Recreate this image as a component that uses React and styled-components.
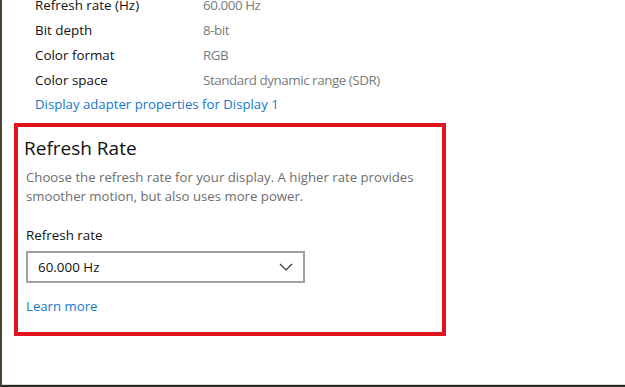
import React from "react";
import styled, { createGlobalStyle } from "styled-components";

const Global = createGlobalStyle`
  html, body { margin: 0; padding: 0; background: #fff; }
  body { font-family: "Open Sans", "Noto Sans", sans-serif; overflow: hidden; }
`;

const Frame = styled.div`
  width: 625px;
  height: 387px;
  box-sizing: border-box;
  border-left: 2px solid #4a4436;
  border-bottom: 2px solid #2c2a26;
  background: #fff;
  overflow: hidden;
  display: flex;
  flex-direction: column;
`;

const Panel = styled.div`
  flex: 1;
  border-bottom: 1px solid #d8d8d8;
  display: flex;
  flex-direction: column;
  margin-top: -8px;
`;

const InfoList = styled.div`
  padding-left: 33px;
  display: flex;
  flex-direction: column;
`;

const InfoRow = styled.div`
  display: grid;
  grid-template-columns: 168px 1fr;
  height: 25px;
  align-items: center;
  font-size: 13.4px;
`;

const Key = styled.span`
  color: #111;
`;

const Value = styled.span`
  color: #7a7a7a;
  letter-spacing: -0.45px;
`;

const Link = styled.a`
  color: #1677c9;
  font-size: 13.2px;
  text-decoration: none;
  line-height: 25px;
  display: block;
`;

const Highlight = styled.section`
  margin: 6px 0 0 12px;
  width: 432px;
  height: 213px;
  box-sizing: border-box;
  border: 4px solid #e0141c;
  padding: 6px 0 0 6px;
  display: flex;
  flex-direction: column;
`;

const Heading = styled.h2`
  margin: 0;
  font-size: 19px;
  font-weight: 400;
  color: #111;
  line-height: 30px;
`;

const Description = styled.p`
  margin: 5px 0 0 2px;
  font-size: 13.2px;
  line-height: 19px;
  color: #6e6e6e;
  width: 410px;
`;

const Label = styled.div`
  margin: 19px 0 0 2px;
  font-size: 13.4px;
  line-height: 20px;
  color: #111;
`;

const Select = styled.div`
  margin: 6px 0 0 2px;
  width: 279px;
  height: 32px;
  box-sizing: border-box;
  border: 2px solid #a0a0a0;
  display: flex;
  align-items: center;
  justify-content: space-between;
  padding: 0 10px 0 10px;
  font-size: 13.4px;
  color: #111;
`;

const LearnMore = styled(Link)`
  margin: 11px 0 0 2px;
`;

const rows = [
  ["Refresh rate (Hz)", "60.000 Hz"],
  ["Bit depth", "8-bit"],
  ["Color format", "RGB"],
  ["Color space", "Standard dynamic range (SDR)"],
];

export default function App() {
  return (
    <>
      <Global />
      <Frame>
        <Panel>
          <InfoList>
            {rows.map(([k, v]) => (
              <InfoRow key={k}>
                <Key>{k}</Key>
                <Value>{v}</Value>
              </InfoRow>
            ))}
            <Link href="#">Display adapter properties for Display 1</Link>
          </InfoList>
          <Highlight>
            <Heading>Refresh Rate</Heading>
            <Description>
              Choose the refresh rate for your display. A higher rate provides
              smoother motion, but also uses more power.
            </Description>
            <Label>Refresh rate</Label>
            <Select>
              <span>60.000 Hz</span>
              <svg width="14" height="8" viewBox="0 0 14 8" fill="none">
                <path d="M1 1l6 6 6-6" stroke="#333" strokeWidth="1.2" />
              </svg>
            </Select>
            <LearnMore href="#">Learn more</LearnMore>
          </Highlight>
        </Panel>
      </Frame>
    </>
  );
}
